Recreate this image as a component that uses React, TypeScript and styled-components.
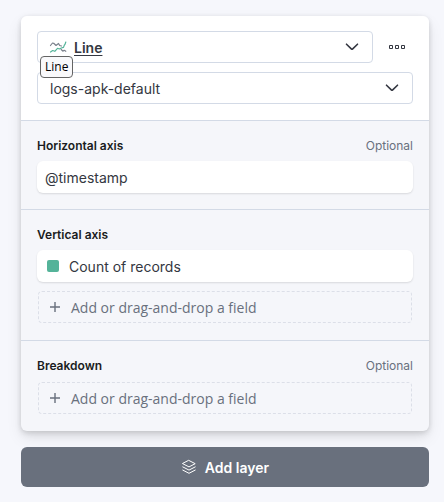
import React from "react";
import styled, { createGlobalStyle, css } from "styled-components";

const GlobalStyle = createGlobalStyle`
  *, *::before, *::after { box-sizing: border-box; }
  body {
    margin: 0;
    background: #f6f7fc;
    color: #343741;
    font: 400 14px/20px Inter, "Liberation Sans", sans-serif;
  }
  button, select { font: inherit; color: inherit; margin: 0; }
`;

const Page = styled.main`
  padding: 16px 15px 15px 21px;
  display: flex;
  flex-direction: column;
  gap: 16px;
`;

const LayerPanel = styled.section`
  background: #f5f6fa;
  border-radius: 6px;
  box-shadow:
    0 1px 5px rgba(0, 0, 0, 0.1),
    0 4px 7px rgba(0, 0, 0, 0.07),
    0 7px 16px rgba(0, 0, 0, 0.08);
`;

const LayerHeader = styled.header`
  display: flex;
  flex-direction: column;
  gap: 9px;
  padding: 15px 16px 16px;
  background: #fff;
  border-radius: 6px 6px 0 0;
`;

const HeaderRow = styled.div`
  display: flex;
  gap: 8px;
`;

const SelectBox = styled.div`
  position: relative;
  flex: 1;
  min-width: 0;
`;

const Select = styled.select<{ $chart?: boolean }>`
  appearance: none;
  display: block;
  width: 100%;
  height: 32px;
  padding: 2px 40px 0 12px;
  border: 1px solid #d3dae6;
  border-radius: 4px;
  background: transparent;
  ${(p) =>
    p.$chart &&
    css`
      padding-left: 36px;
      font-weight: 600;
      text-decoration: underline;
      text-underline-offset: 2px;
    `}
`;

const SelectIcon = styled.span<{ $side: "left" | "right" }>`
  position: absolute;
  top: 0;
  bottom: 0;
  ${(p) => (p.$side === "left" ? "left: 12px;" : "right: 14px;")}
  display: flex;
  align-items: center;
  pointer-events: none;
`;

const Tooltip = styled.div`
  position: absolute;
  top: 25px;
  left: 3px;
  z-index: 1;
  padding: 1px 4px;
  border: 1px solid #646464;
  border-radius: 4px;
  background: #f9f9fb;
  color: #000;
  font: 12px/18px "Open Sans", sans-serif;
`;

const IconButton = styled.button`
  display: flex;
  align-items: center;
  justify-content: center;
  width: 32px;
  height: 32px;
  padding: 0;
  border: 0;
  background: none;
`;

const Group = styled.section`
  display: flex;
  flex-direction: column;
  padding: 16px;
  border-top: 1px solid #d3dae6;
`;

const GroupHeader = styled.div`
  display: flex;
  justify-content: space-between;
  margin-bottom: 6px;
  font-size: 12px;
  line-height: 18px;
`;

const GroupTitle = styled.h3`
  margin: 0;
  font-size: 12px;
  font-weight: 600;
  color: #1a1c21;
`;

const Hint = styled.span`
  color: #69707d;
`;

const Fields = styled.div`
  display: flex;
  flex-direction: column;
  gap: 8px;
`;

const Field = styled.button`
  display: flex;
  align-items: center;
  gap: 10px;
  height: 32px;
  padding: 0 8px;
  border: 0;
  border-radius: 6px;
  background: #fff;
  text-align: left;
  box-shadow: 0 1px 2px rgba(0, 0, 0, 0.12);
`;

const ButtonLabel = styled.span`
  padding-top: 2px;
`;

const Swatch = styled.span`
  width: 12px;
  height: 12px;
  margin-left: 2px;
  border-radius: 2px;
  background: #54b399;
`;

const AddField = styled.button`
  display: flex;
  align-items: center;
  gap: 11px;
  height: 32px;
  margin: 1px;
  padding: 0 11px;
  border: 1px dashed #dcdfe8;
  border-radius: 4px;
  background: none;
  color: #69707d;
  font-family: "Open Sans", sans-serif;
  text-align: left;
`;

const AddLayer = styled.button`
  display: flex;
  align-items: center;
  justify-content: center;
  gap: 8px;
  height: 40px;
  border: 0;
  border-radius: 6px;
  background: #69707d;
  color: #fff;
  font-weight: 600;
`;

const Chevron = () => (
  <SelectIcon $side="right">
    <svg width="14" height="8" viewBox="0 0 14 8" fill="none" stroke="#343741" strokeWidth="1.6" strokeLinecap="round">
      <path d="M1.500 1.200 6.300 5.900a1 1 0 0 0 1.400 0l4.800-4.700" />
    </svg>
  </SelectIcon>
);

const LineChartIcon = () => (
  <svg width="18" height="12" viewBox="0 0 18 12" fill="none" strokeWidth="1.2" strokeLinecap="round" strokeLinejoin="round">
    <path stroke="#7b818c" d="M1.500 4.500 3.500 2l1.200.3L7 4.500 9.500 2.500l1.200 2L12.500 5M12.200 8.500l1.600 1.700 1.400-.9 1.600 1" />
    <path stroke="#54b399" d="M1.500 11l2.200-1.500 2.100.8L8.500 7.300l1.800.7 2-1 2.200-.6.900-2.400.6-.6.800-2.400" />
  </svg>
);

const BoxesIcon = () => (
  <svg width="16" height="16" viewBox="0 0 16 16" fill="none" stroke="#343741">
    <path d="M.5 6.500h3v3h-3zM6.500 6.500h3v3h-3zM12.500 6.500h3v3h-3z" />
  </svg>
);

const PlusIcon = () => (
  <svg width="10" height="10" viewBox="0 0 10 10" stroke="#69707d" strokeWidth="1.4">
    <path d="M5 0v10M0 5h10" />
  </svg>
);

const LayersIcon = () => (
  <svg width="16" height="16" viewBox="0 0 16 16" fill="none" stroke="#fff" strokeLinejoin="round" strokeLinecap="round">
    <path d="M8 1.500 14.200 4.700 8 7.900 1.800 4.700zM1.800 7.900 8 11.100l6.200-3.200M1.800 11.100 8 14.300l6.200-3.200" />
  </svg>
);

function AddFieldButton() {
  return (
    <AddField type="button">
      <PlusIcon />
      <ButtonLabel>Add or drag-and-drop a field</ButtonLabel>
    </AddField>
  );
}

interface AxisGroupProps {
  title: string;
  optional?: boolean;
  children: React.ReactNode;
}

function AxisGroup({ title, optional, children }: AxisGroupProps) {
  return (
    <Group aria-label={title}>
      <GroupHeader>
        <GroupTitle>{title}</GroupTitle>
        {optional && <Hint>Optional</Hint>}
      </GroupHeader>
      <Fields>{children}</Fields>
    </Group>
  );
}

export default function App() {
  return (
    <>
      <GlobalStyle />
      <Page>
        <LayerPanel>
          <LayerHeader>
            <HeaderRow>
              <SelectBox>
                <SelectIcon $side="left">
                  <LineChartIcon />
                </SelectIcon>
                <Select $chart aria-label="Layer chart type" defaultValue="line">
                  <option value="line">Line</option>
                </Select>
                <Chevron />
                <Tooltip role="tooltip">Line</Tooltip>
              </SelectBox>
              <IconButton type="button" aria-label="Layer actions">
                <BoxesIcon />
              </IconButton>
            </HeaderRow>
            <SelectBox>
              <Select aria-label="Data view" defaultValue="logs">
                <option value="logs">logs-apk-default</option>
              </Select>
              <Chevron />
            </SelectBox>
          </LayerHeader>
          <AxisGroup title="Horizontal axis" optional>
            <Field type="button">
              <ButtonLabel>@timestamp</ButtonLabel>
            </Field>
          </AxisGroup>
          <AxisGroup title="Vertical axis">
            <Field type="button">
              <Swatch />
              <ButtonLabel>Count of records</ButtonLabel>
            </Field>
            <AddFieldButton />
          </AxisGroup>
          <AxisGroup title="Breakdown" optional>
            <AddFieldButton />
          </AxisGroup>
        </LayerPanel>
        <AddLayer type="button">
          <LayersIcon />
          <ButtonLabel>Add layer</ButtonLabel>
        </AddLayer>
      </Page>
    </>
  );
}
